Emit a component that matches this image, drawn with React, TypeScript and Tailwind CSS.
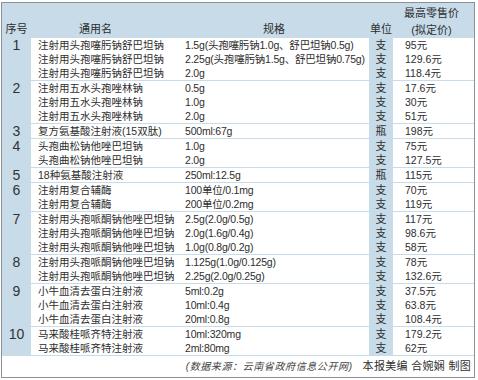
const groups = [
  {
    no: '1',
    rows: [
      ['注射用头孢噻肟钠舒巴坦钠', '1.5g(头孢噻肟钠1.0g、舒巴坦钠0.5g)', '支', '95元'],
      ['注射用头孢噻肟钠舒巴坦钠', '2.25g(头孢噻肟钠1.5g、舒巴坦钠0.75g)', '支', '129.6元'],
      ['注射用头孢噻肟钠舒巴坦钠', '2.0g', '支', '118.4元'],
    ],
  },
  {
    no: '2',
    rows: [
      ['注射用五水头孢唑林钠', '0.5g', '支', '17.6元'],
      ['注射用五水头孢唑林钠', '1.0g', '支', '30元'],
      ['注射用五水头孢唑林钠', '2.0g', '支', '51元'],
    ],
  },
  { no: '3', rows: [['复方氨基酸注射液(15双肽)', '500ml:67g', '瓶', '198元']] },
  {
    no: '4',
    rows: [
      ['头孢曲松钠他唑巴坦钠', '1.0g', '支', '75元'],
      ['头孢曲松钠他唑巴坦钠', '2.0g', '支', '127.5元'],
    ],
  },
  { no: '5', rows: [['18种氨基酸注射液', '250ml:12.5g', '瓶', '115元']] },
  {
    no: '6',
    rows: [
      ['注射用复合辅酶', '100单位/0.1mg', '支', '70元'],
      ['注射用复合辅酶', '200单位/0.2mg', '支', '119元'],
    ],
  },
  {
    no: '7',
    rows: [
      ['注射用头孢哌酮钠他唑巴坦钠', '2.5g(2.0g/0.5g)', '支', '117元'],
      ['注射用头孢哌酮钠他唑巴坦钠', '2.0g(1.6g/0.4g)', '支', '98.6元'],
      ['注射用头孢哌酮钠他唑巴坦钠', '1.0g(0.8g/0.2g)', '支', '58元'],
    ],
  },
  {
    no: '8',
    rows: [
      ['注射用头孢哌酮钠他唑巴坦钠', '1.125g(1.0g/0.125g)', '支', '78元'],
      ['注射用头孢哌酮钠他唑巴坦钠', '2.25g(2.0g/0.25g)', '支', '132.6元'],
    ],
  },
  {
    no: '9',
    rows: [
      ['小牛血清去蛋白注射液', '5ml:0.2g', '支', '37.5元'],
      ['小牛血清去蛋白注射液', '10ml:0.4g', '支', '63.8元'],
      ['小牛血清去蛋白注射液', '20ml:0.8g', '支', '108.4元'],
    ],
  },
  {
    no: '10',
    rows: [
      ['马来酸桂哌齐特注射液', '10ml:320mg', '支', '179.2元'],
      ['马来酸桂哌齐特注射液', '2ml:80mg', '支', '62元'],
    ],
  },
];

const font = { fontFamily: '"Liberation Sans", "Noto Sans CJK SC", sans-serif' };

export default function App() {
  return (
    <div className="w-[478px] h-[380px] bg-white pt-[2px] pl-[1px]" style={font}>
      <div className="w-[474px] h-[376px] border border-[#8c9096] bg-[#c7dbe8] flex flex-col text-[#2e2e2e]">
        {/* header */}
        <div className="flex h-[35px] text-[11px] leading-none">
          <div className="w-[29px] flex items-end justify-center pb-[3px]">序号</div>
          <div className="w-[152px] flex items-end pl-[48px] pb-[3px]">通用名</div>
          <div className="w-[186px] flex items-end pl-[80px] pb-[3px]">规格</div>
          <div className="w-[24px] flex items-end justify-center pb-[3px]">单位</div>
          <div className="flex-1 flex flex-col items-center justify-end gap-[6px] pb-[2px] pr-[4px]">
            <span>最高零售价</span>
            <span>(拟定价)</span>
          </div>
        </div>

        {/* body */}
        <div className="flex flex-col gap-px">
          {groups.map((g) => (
            <div key={g.no} className="flex">
              <div className="w-[29px] h-[14px] flex items-center justify-center text-[14px] leading-none text-[#333]">
                {g.no}
              </div>
              <div className="flex flex-col flex-1">
                {g.rows.map((r, i) => (
                  <div key={i} className="flex h-[14px] items-center text-[10.5px] leading-none">
                    <div className="w-[152px] h-full bg-white flex items-center pl-[7px] whitespace-nowrap">{r[0]}</div>
                    <div className="w-[186px] h-full bg-white flex items-center pl-[2px] whitespace-nowrap tracking-[-0.2px]">
                      {r[1]}
                    </div>
                    <div className="w-[24px] h-full flex items-center justify-center text-[11px]">{r[2]}</div>
                    <div className="flex-1 h-full bg-white flex items-center pl-[12px] whitespace-nowrap">{r[3]}</div>
                  </div>
                ))}
              </div>
            </div>
          ))}
        </div>

        {/* footer */}
        <div className="flex-1 bg-white mt-px flex items-center justify-end pr-[3px] gap-[10px] text-[11px] leading-none">
          <span className="italic text-[10px] tracking-[0.6px] text-[#444]">(数据来源：云南省政府信息公开网)</span>
          <span className="tracking-[0.3px]">本报美编 合婉娴 制图</span>
        </div>
      </div>
    </div>
  );
}
